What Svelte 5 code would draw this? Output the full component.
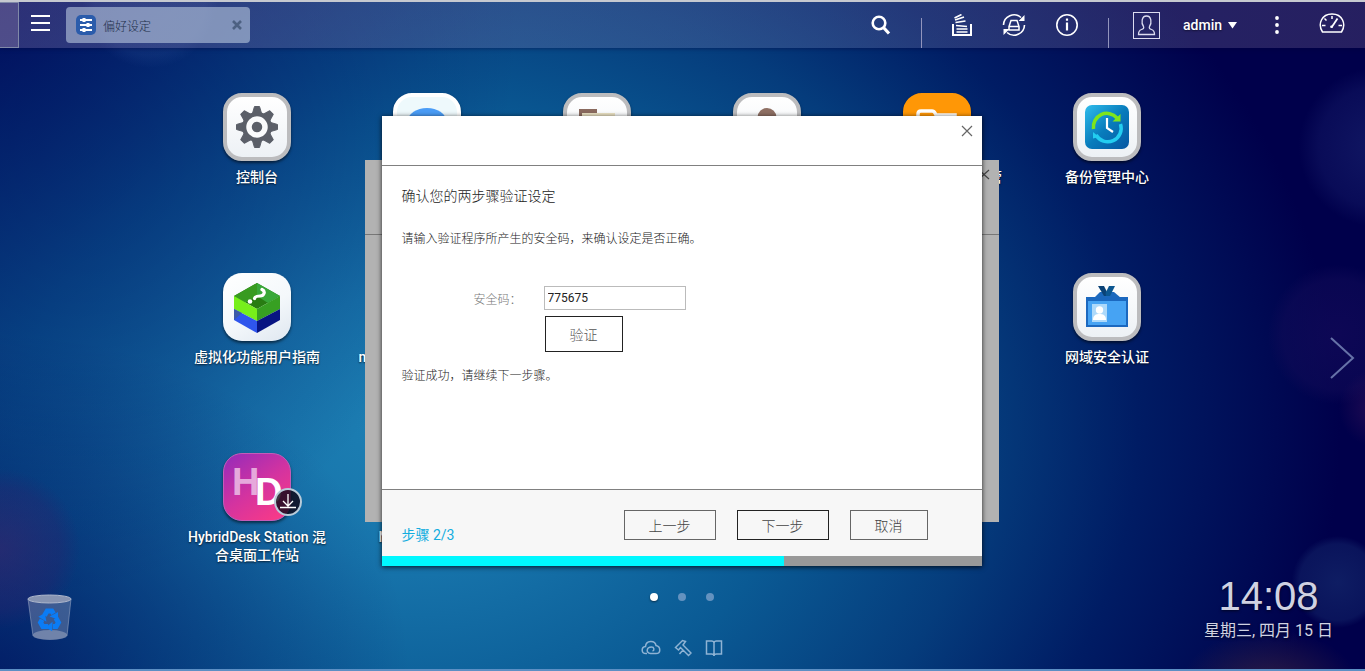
<script>
  const apps = [
    { name: '控制台', icon: 'gear', framed: true },
    { name: 'myQNAPcloud', icon: 'cloud' },
    { name: '公告栏', icon: 'board', framed: true },
    { name: '用户', icon: 'user', framed: true },
    { name: 'File Station 文件总管', icon: 'folder' },
    { name: '备份管理中心', icon: 'backup', framed: true },
    { name: '虚拟化功能用户指南', icon: 'guide' },
    { name: 'myQNAPcloud 云服务', icon: '' },
    { name: '网域安全认证', icon: 'domain', framed: true, last: true },
    { name: 'HybridDesk Station 混合桌面工作站', icon: 'hybrid' },
    { name: 'Notes Station 3', icon: '' }
  ]

  const teeth = [0, 45, 90, 135, 180, 225, 270, 315]
  const total = 3

  let step = $state(2)
  let page = $state(0)
  let code = $state('775675')
  let message = $state('验证成功，请继续下一步骤。')
  let open = $state(true)
  let progress = $derived(Math.round((step / total) * 100))

  function verify() {
    message = code ? '验证成功，请继续下一步骤。' : '请输入安全码。'
  }
</script>

<div class="desktop">
  <header>
    <button class="show-desktop" aria-label="显示桌面"></button>
    <button class="menu" aria-label="主菜单">
      <svg width="20" height="20" viewBox="0 0 20 20">
        <path d="M0 1h19M0 8h19M0 15h19" stroke="#fff" stroke-width="2" />
      </svg>
    </button>
    <div class="tab">
      <svg width="20" height="20" viewBox="0 0 20 20">
        <rect width="20" height="20" rx="5" fill="#2b5cab" />
        <path d="M4 5h12M4 10h12M4 15h12" stroke="#fff" stroke-width="2" />
        <path d="M8 3v4M12 8v4M8 13v4" stroke="#fff" stroke-width="3" />
      </svg>
      <span>偏好设定</span>
      <button class="tab-close" aria-label="关闭">
        <svg width="10" height="10" viewBox="0 0 10 10">
          <path d="M1 1l8 8M9 1l-8 8" stroke="#4d6182" stroke-width="2.6" />
        </svg>
      </button>
    </div>

    <nav>
      <button class="search" aria-label="搜索">
        <svg width="20" height="20" viewBox="0 0 20 20" fill="none" stroke="#fff">
          <circle cx="8" cy="8" r="6.3" stroke-width="2.6" />
          <path d="M12.5 12.5l5.5 6" stroke-width="3.2" />
        </svg>
      </button>
      <i class="divider"></i>
      <button aria-label="后台任务">
        <svg width="20" height="22" viewBox="0 0 20 22" fill="none" stroke="#fff">
          <path d="M1 10v11h18V10" stroke-width="2" />
          <path d="M4.5 18h11M4.5 15h11M4 11.500l11 1M3.500 8.500l10-1.500M3 6l9-3M2.500 4l7-3.500" stroke-width="1.6" />
        </svg>
      </button>
      <button aria-label="外接设备">
        <svg width="24" height="24" viewBox="0 0 24 24" fill="none" stroke="#fff" stroke-width="1.6">
          <path d="M1.500 12A10.500 10.500 0 0 1 19 4.500M22.500 12A10.500 10.500 0 0 1 5 19.500" />
          <path d="M22.500 2v6h-6zM1.500 22v-6h6z" fill="#fff" stroke="none" />
          <path d="M7 13.500L9 7.500h6l2 6v3.500H7zM7 13.500h10" stroke-width="1.500" />
        </svg>
      </button>
      <button aria-label="事件通知">
        <svg width="22" height="22" viewBox="0 0 22 22" fill="none" stroke="#fff">
          <circle cx="11" cy="11" r="10.200" stroke-width="1.600" />
          <path d="M11 4.500v2.200M11 8.500v8" stroke-width="2.200" />
        </svg>
      </button>
      <i class="divider"></i>
      <button class="account">
        <svg class="avatar" width="27" height="27" viewBox="0 0 27 27" fill="none" stroke="#dcdcf0">
          <rect x=".5" y=".5" width="26" height="26" />
          <path
            d="M10.500 14.500C8 11 8.500 4 13.500 4s5.500 7 3 10.500c-.6 1.500 0 2.300 2 3 2.300.8 3 2.200 3 5h-16c0-2.800.7-4.200 3-5 2-.7 2.600-1.500 2-3z"
            stroke-width="1.300"
          />
        </svg>
        <span>admin</span>
        <svg width="9" height="7" viewBox="0 0 9 7"><path d="M0 0h9L4.500 6.500z" fill="#fff" /></svg>
      </button>
      <button aria-label="更多">
        <svg width="4" height="18" viewBox="0 0 4 18" fill="#fff">
          <circle cx="2" cy="2" r="1.900" /><circle cx="2" cy="9" r="1.900" /><circle cx="2" cy="16" r="1.900" />
        </svg>
      </button>
      <button class="gauge" aria-label="仪表板">
        <svg width="26" height="24" viewBox="0 0 26 24" fill="none" stroke="#fff" stroke-width="1.500">
          <path d="M3.500 19C-1.500 11 2.500 1 13 1s14.500 10 9.500 18z" stroke-linejoin="round" />
          <path d="M13 3v3M5.500 5.500l2 2M3 12.500h3.500M19.500 12.500H23" />
          <path d="M12.500 14.500l6-9" stroke-width="1.800" />
          <circle cx="12.500" cy="13.800" r="1.300" fill="#fff" stroke="none" />
        </svg>
      </button>
    </nav>
  </header>

  <main>
    {#each apps as app}
      <button class="app" class:last={app.last}>
        <span class="tile {app.icon}" class:framed={app.framed}>
          {#if app.icon === 'gear'}
            <svg viewBox="0 0 60 60">
              <g fill="#5b5f68">
                {#each teeth as angle}
                  <path d="M25 18l2.500-8.500h5L35 18z" stroke="#5b5f68" stroke-linejoin="round" transform="rotate({angle} 30 30)" />
                {/each}
                <circle cx="30" cy="30" r="15" />
              </g>
              <circle cx="30" cy="30" r="8" fill="#5b5f68" stroke="#fafbfc" stroke-width="5.500" />
            </svg>
          {:else if app.icon === 'cloud'}
            <svg viewBox="0 0 60 60"><ellipse cx="30" cy="24" rx="19" ry="13" fill="#4a9cf6" /></svg>
          {:else if app.icon === 'board'}
            <svg viewBox="0 0 60 60">
              <path d="M12 12h18v20H12z" fill="#8a6a5e" />
              <path d="M15 16h33v20H15z" fill="#ece3c4" />
            </svg>
          {:else if app.icon === 'user'}
            <svg viewBox="0 0 60 60"><circle cx="30" cy="20.500" r="9.500" fill="#8f7064" /></svg>
          {:else if app.icon === 'folder'}
            <svg viewBox="0 0 60 60">
              <path d="M11 40V17q0-3 3-3h11q2 0 3 2l1 2h19v22z" fill="none" stroke="#fff" stroke-width="3.500" />
            </svg>
          {:else if app.icon === 'backup'}
            <svg viewBox="0 0 60 60">
              <defs>
                <linearGradient id="blue" x1="0" y1="0" x2="1" y2="1">
                  <stop offset="0" stop-color="#30bdec" /><stop offset=".5" stop-color="#087cbc" /><stop offset="1" stop-color="#0656a2" />
                </linearGradient>
              </defs>
              <rect x="8" y="8" width="44" height="44" rx="7" fill="url(#blue)" />
              <path d="M16.500 32A13.500 13.500 0 0 1 40 21" fill="none" stroke="#7fe51c" stroke-width="3.500" />
              <path d="M43.500 17v7.500h-8z" fill="#7fe51c" />
              <path d="M43.500 27A13.500 13.500 0 0 1 19 38" fill="none" stroke="#23cdf0" stroke-width="3.500" />
              <path d="M16 35v6.500l6-1.500z" fill="#23cdf0" />
              <path d="M30 21v10l6 4" fill="none" stroke="#fff" stroke-width="2.200" />
            </svg>
          {:else if app.icon === 'guide'}
            <svg viewBox="0 0 68 68">
              <path d="M34 10l23 13-23 13-23-13z" fill="#287c12" />
              <path d="M34 10v13L11 36V23z" fill="#389b20" />
              <path d="M34 10l23 13-12 7-11-7z" fill="#39a839" />
              <path d="M11 23l23 13v12L11 36z" fill="#77ef1b" />
              <path d="M57 23L34 36v12l23-12z" fill="#37a022" />
              <path d="M11 36l23 12v12L11 47z" fill="#2f55ec" />
              <path d="M57 36L34 48v12l23-13z" fill="#081482" />
              <path d="M11 36l8 4-8 7z" fill="#3c5aa8" />
              <path d="M39 16.500c4 2 2 6.500-2 6.500-3 0-5 .5-5.500 2.500" fill="none" stroke="#fff" stroke-width="3.200" stroke-linecap="round" />
              <circle cx="27" cy="28.500" r="2.300" fill="#fff" />
            </svg>
          {:else if app.icon === 'domain'}
            <svg viewBox="0 0 60 60">
              <path d="M17 21l6-6h14l7 6z" fill="#1c69bd" />
              <path d="M21 9h6l5 10h-5z" fill="#0a4276" />
              <path d="M32 9h6l-5 10h-4l-.5-3z" fill="#0c5791" />
              <rect x="10" y="21" width="40" height="28" fill="#46a3f3" stroke="#1b68bf" stroke-width="2" />
              <path d="M9 20h42v4H9z" fill="#1b68bf" />
              <path d="M15 27h15v18H15z" fill="#add9fa" />
              <circle cx="22.500" cy="33" r="3.700" fill="#fff" />
              <path d="M16 43c0-5 3-6 6.500-6s6.500 1 6.500 6z" fill="#fff" />
            </svg>
          {:else if app.icon === 'hybrid'}
            <b class="h">H</b><b class="d">D</b>
            <span class="download">
              <svg width="28" height="28" viewBox="0 0 28 28">
                <circle cx="14" cy="14" r="13" fill="#100818" fill-opacity=".82" stroke="#b9cbd9" stroke-width="2" />
                <path d="M14 6v12M9 13l5 5 5-5M6 19.500h16" fill="none" stroke="#fff" stroke-width="1.300" />
              </svg>
            </span>
          {/if}
        </span>
        <span class="name">{app.name}</span>
      </button>
    {/each}
  </main>

  <footer>
    <button class="trash" aria-label="回收站">
      <svg width="46" height="48" viewBox="0 0 46 48">
        <path d="M1 5l5 37c1 5 33 5 34 0l4-37z" fill="#8798bd" fill-opacity=".42" />
        <ellipse cx="22.500" cy="5" rx="21.500" ry="4" fill="#8794b2" stroke="#aeb7cc" />
        <ellipse cx="23" cy="41" rx="17" ry="5" fill="#a5adc4" fill-opacity=".5" />
        <path d="M1 5l5 37M44 5l-4 37" stroke="#a6b2cc" stroke-opacity=".5" />
        {#each [0, 120, 240] as angle}
          <g transform="rotate({angle} 22.500 26)">
            <path d="M17.500 21.500l2.700-4.500h4.600l1.700 2.800" fill="none" stroke="#0b7cf5" stroke-width="5" />
            <path d="M22.500 22.500l8.500-4.500v7.500z" fill="#0b7cf5" />
          </g>
        {/each}
      </svg>
    </button>

    <div class="center">
      <div class="dots">
        {#each [0, 1, 2] as n}
          <button class:active={page === n} onclick={() => (page = n)} aria-label="第 {n + 1} 页"></button>
        {/each}
      </div>
      <div class="tools">
        <a href="#cloud" aria-label="myQNAPcloud">
          <svg width="20" height="18" viewBox="0 0 20 18">
            <path d="M6 14.500H5C0 14.500 0 8 4.500 7.500 5 1 14 1 15 6.500c5 1 5 8 0 8H9.500c-5-.5-4-6.500 1-6.500 3 0 3 3.500 1 4" />
          </svg>
        </a>
        <a href="#tools" aria-label="工具">
          <svg width="18" height="18" viewBox="0 0 18 18">
            <path d="M1.500 8.500L8.500 1.500l3 1L9 6l8 8-2.500 2.500L6.500 8.500 4.500 11zM9 11l-3.500 4" />
          </svg>
        </a>
        <a href="#help" aria-label="说明">
          <svg width="18" height="18" viewBox="0 0 18 18">
            <path d="M1.500 2h5q2.500 0 2.500 2 0-2 2.500-2h5v13h-5Q9 15 9 17q0-2-2.500-2h-5zM9 4v12" />
          </svg>
        </a>
      </div>
    </div>

    <div class="clock">
      <time>14:08</time>
      <p>星期三, 四月 15 日</p>
    </div>
  </footer>

  <button class="next-page" onclick={() => (page = (page + 1) % 3)} aria-label="下一页">
    <svg width="26" height="42" viewBox="0 0 26 42">
      <path d="M2 1l22 20L2 41" fill="none" stroke="#6672a8" stroke-width="2" />
    </svg>
  </button>

  <section class="window">
    <div class="window-head">
      <svg width="12" height="12" viewBox="0 0 12 12"><path d="M1 1l10 9M11 1L1 10" stroke="#444" stroke-width="1.200" /></svg>
    </div>
  </section>

  {#if open}
    <section class="dialog" role="dialog" aria-labelledby="title">
      <div class="dialog-head">
        <button aria-label="关闭" onclick={() => (open = false)}>
          <svg width="12" height="12" viewBox="0 0 12 12"><path d="M1 1l10 10M11 1L1 11" stroke="#666" stroke-width="1.200" /></svg>
        </button>
      </div>
      <div class="dialog-body">
        <h1 id="title">确认您的两步骤验证设定</h1>
        <p class="hint">请输入验证程序所产生的安全码，来确认设定是否正确。</p>
        <div class="form">
          <label for="code">安全码：</label>
          <input id="code" type="text" bind:value={code} />
          <button class="verify" onclick={verify}>验证</button>
        </div>
        <p class="message">{message}</p>
      </div>
      <div class="dialog-foot">
        <span class="step">步骤 {step}/{total}</span>
        <div class="actions">
          <button onclick={() => (step = Math.max(1, step - 1))}>上一步</button>
          <button class="primary" onclick={() => (step = Math.min(total, step + 1))}>下一步</button>
          <button class="cancel" onclick={() => (open = false)}>取消</button>
        </div>
      </div>
      <div class="progress"><div style="width: {progress}%"></div></div>
    </section>
  {/if}
</div>

<style>
  :global(body) {
    background: #00004b;
    font-family: Roboto, 'Noto Sans CJK SC', sans-serif;
  }

  button {
    padding: 0;
    border: none;
    background: none;
    color: inherit;
    font-family: inherit;
    cursor: pointer;
  }

  svg {
    display: block;
  }

  h1,
  p {
    margin: 0;
    font-weight: 300;
  }

  .desktop {
    position: relative;
    display: flex;
    flex-direction: column;
    box-sizing: border-box;
    min-height: 100vh;
    overflow: hidden;
    border-bottom: 2px solid #5c8fc4;
    color: #fff;
    background:
      radial-gradient(circle at 0% 82%, rgba(60, 38, 110, 0.55) 0, rgba(45, 35, 110, 0.35) 60px, transparent 80px),
      radial-gradient(circle at 101% 61%, rgba(60, 20, 90, 0.6) 0, transparent 40px),
      radial-gradient(circle at 98% 50%, rgba(22, 12, 92, 0.6) 0, rgba(18, 12, 88, 0.5) 55px, transparent 70px),
      radial-gradient(circle at 98% 87%, rgba(18, 36, 105, 0.8) 0, rgba(14, 28, 98, 0.7) 38px, transparent 46px),
      radial-gradient(circle at 101% 22%, rgba(28, 38, 115, 0.6) 0, rgba(18, 23, 100, 0.5) 60px, transparent 80px),
      radial-gradient(ellipse 90px 60px at 93% 103%, rgba(60, 38, 65, 0.8) 0, transparent 100%),
      radial-gradient(circle at 11% 0%, rgba(60, 100, 170, 0.2) 0, rgba(60, 100, 170, 0.15) 55px, transparent 68px),
      radial-gradient(ellipse 38% 90% at 0% 0%, rgba(0, 0, 85, 0.65) 0, transparent 100%),
      radial-gradient(ellipse 30% 50% at 0% 100%, rgba(0, 5, 85, 0.6) 0, transparent 100%),
      radial-gradient(ellipse 62% 100% at 30% 64%, #1d80b4 0, #1774ab 20%, #0a5a94 46%, #053c7c 68%, #001c64 86%, #00004b 110%);
  }

  header {
    display: flex;
    align-items: center;
    box-sizing: border-box;
    height: 48px;
    border-top: 2px solid #c6c9d0;
    background: linear-gradient(90deg, rgba(125, 110, 165, 0.35), rgba(115, 125, 175, 0.3) 60%, rgba(115, 95, 140, 0.33));
    box-shadow: 0 1px 4px rgba(0, 0, 60, 0.4);
  }

  .show-desktop {
    align-self: stretch;
    width: 19px;
    border: 1px solid #8089a8;
    border-left: none;
    background: rgba(160, 140, 180, 0.3);
  }

  .menu {
    margin: 0 15px 0 12px;
  }

  .tab {
    display: flex;
    align-items: center;
    gap: 7px;
    box-sizing: border-box;
    width: 184px;
    height: 36px;
    padding: 0 8px 0 10px;
    border-radius: 4px;
    background: rgba(190, 205, 225, 0.58);
    color: #222f4a;
    font-size: 12px;
    font-weight: 300;
  }

  .tab-close {
    margin-left: auto;
  }

  nav {
    display: flex;
    align-items: center;
    align-self: stretch;
    gap: 30px;
    margin-left: auto;
    padding-right: 20px;
  }

  .divider {
    align-self: flex-end;
    width: 1px;
    height: 30px;
    background: #9295bd;
  }

  .account {
    display: flex;
    align-items: center;
    margin: 0 8px 0 -6px;
    font-size: 14px;
    font-weight: 500;
    text-shadow: 0 1px 2px rgba(0, 0, 0, 0.5);
  }

  .avatar {
    margin-right: 23px;
  }

  .account span {
    margin-right: 6px;
  }

  .gauge {
    margin-left: 10px;
  }

  main {
    display: grid;
    grid-template-columns: repeat(6, 170px);
    grid-template-rows: 180px 180px 120px;
    justify-content: center;
    margin-top: 45px;
    padding-right: 1px;
  }

  .app {
    display: flex;
    flex-direction: column;
    align-items: center;
    align-self: start;
    justify-self: center;
    width: 144px;
  }

  .last {
    grid-column: 6;
  }

  .tile {
    position: relative;
    box-sizing: border-box;
    width: 68px;
    height: 68px;
    border-radius: 19px;
    background: linear-gradient(150deg, #fff, #f4f8fb 55%, #dfe7f0);
    box-shadow: 0 2px 3px rgba(0, 0, 0, 0.55);
  }

  .framed {
    border: 4px solid #bcbcbe;
    background: linear-gradient(#fff, #edf1f5);
  }

  .cloud {
    border: 4px solid #fff;
    background: #eef9fc;
  }

  .folder {
    background: #ff9706;
    border: 4px solid #ff9706;
  }

  .hybrid {
    background: linear-gradient(145deg, #9a2cb8 5%, #d333a0 50%, #ff3b83);
    border: 1px solid #c45cb8;
  }

  .h,
  .d {
    position: absolute;
    font: 700 38px/40px 'Liberation Sans', sans-serif;
  }

  .h {
    left: 8px;
    top: 8px;
    color: #e6a9dc;
  }

  .d {
    left: 31px;
    top: 18px;
  }

  .download {
    position: absolute;
    right: -12px;
    bottom: 4px;
  }

  .name {
    margin-top: 7px;
    font-size: 14px;
    font-weight: 500;
    line-height: 18px;
    text-shadow: 0 1px 2px rgba(0, 0, 0, 0.7);
  }

  footer {
    display: grid;
    grid-template-columns: 1fr auto 1fr;
    align-items: start;
    flex: 1;
  }

  .trash {
    justify-self: start;
    margin: 21px 0 0 27px;
  }

  .center {
    display: flex;
    flex-direction: column;
    align-items: center;
    gap: 38px;
    margin-top: 20px;
    padding-right: 2px;
  }

  .dots {
    display: flex;
    gap: 20px;
  }

  .dots button {
    width: 8px;
    height: 8px;
    border-radius: 50%;
    background: #6492bf;
  }

  .dots .active {
    background: #fff;
    box-shadow: 0 1px 2px rgba(0, 0, 0, 0.5);
  }

  .tools {
    display: flex;
    gap: 13px;
  }

  .tools path {
    fill: none;
    stroke: #8fb3d4;
    stroke-width: 1.5;
  }

  .clock {
    justify-self: end;
    margin-right: 32px;
    text-align: center;
    color: #d0d2e2;
    text-shadow: 0 1px 3px rgba(0, 0, 0, 0.6);
  }

  .clock time {
    display: block;
    font: 40px/46px 'Liberation Sans', sans-serif;
  }

  .clock p {
    font-size: 16px;
    font-weight: 400;
    line-height: 24px;
  }

  .next-page {
    position: absolute;
    top: 337px;
    right: 10px;
  }

  .window {
    position: absolute;
    top: 160px;
    left: 50%;
    width: 634px;
    height: 362px;
    margin-left: -318px;
    background: #b2b2b2;
  }

  .window-head {
    display: flex;
    justify-content: flex-end;
    box-sizing: border-box;
    height: 75px;
    padding: 9px 9px 0 0;
    border-bottom: 1px solid #777;
  }

  .dialog {
    position: absolute;
    top: 116px;
    left: 50%;
    width: 600px;
    margin-left: -301px;
    background: #fff;
    color: #222;
    box-shadow: 0 1px 5px rgba(0, 0, 0, 0.8);
  }

  .dialog-head {
    display: flex;
    align-items: flex-start;
    justify-content: flex-end;
    box-sizing: border-box;
    height: 50px;
    padding: 9px;
    border-bottom: 1px solid #808080;
  }

  .dialog-body {
    box-sizing: border-box;
    min-height: 323px;
    padding: 20px;
  }

  h1 {
    font-size: 14px;
    line-height: 20px;
  }

  .hint,
  .message {
    font-size: 12px;
    line-height: 20px;
  }

  .hint {
    margin-top: 23px;
  }

  .form {
    display: grid;
    grid-template-columns: 142px 142px;
    align-items: center;
    row-gap: 6px;
    margin: 37px 0 14px;
  }

  label {
    padding-left: 72px;
    color: #777;
    font-size: 12px;
    font-weight: 300;
  }

  input {
    box-sizing: border-box;
    height: 24px;
    padding: 0 3px;
    border: 1px solid #bbb;
    border-radius: 0;
    color: #222;
    font: 12px Roboto, sans-serif;
  }

  .verify {
    grid-column: 2;
    width: 78px;
    height: 36px;
    margin-left: 1px;
    border: 1px solid #222;
    color: #555;
    font-size: 14px;
    font-weight: 300;
  }

  .dialog-foot {
    display: flex;
    justify-content: space-between;
    box-sizing: border-box;
    height: 67px;
    padding: 20px 54px 0 20px;
    border-top: 1px solid #808080;
    background: #f7f7f7;
  }

  .step {
    margin-top: 15px;
    color: #12addf;
    font-size: 14px;
    line-height: 20px;
  }

  .actions {
    display: flex;
    gap: 21px;
  }

  .actions button {
    width: 92px;
    height: 30px;
    border: 1px solid #666;
    color: #444;
    font-size: 14px;
    font-weight: 300;
  }

  .actions .primary {
    border-color: #222;
  }

  .actions .cancel {
    width: 78px;
  }

  .progress {
    height: 10px;
    background: #999;
  }

  .progress div {
    height: 100%;
    background: #00f8ff;
  }
</style>
